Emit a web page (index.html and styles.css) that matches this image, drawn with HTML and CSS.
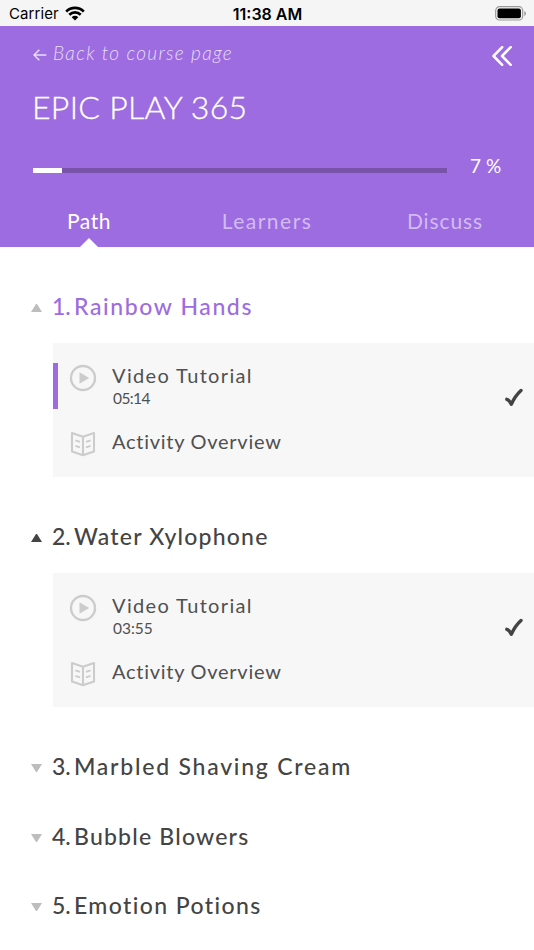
FILE: index.html
```html
<!DOCTYPE html>
<html lang="en">
<head>
<meta charset="utf-8">
<title>EPIC PLAY 365</title>
<link rel="stylesheet" href="styles.css">
</head>
<body>
<svg class="defs" aria-hidden="true">
  <symbol id="play" viewBox="0 0 28 28"><circle cx="14" cy="14" r="12" fill="none" stroke="currentColor" stroke-width="2.4"/><path d="M10.500 8.300v11.400l9.700-5.700z" fill="currentColor"/></symbol>
  <symbol id="book" viewBox="0 0 28 28"><g fill="none" stroke="currentColor" stroke-width="2.1" stroke-linejoin="round"><path d="M14 6.800 3 3v18.500l11 3.700 11-3.700V3zM14 6.800V25"/><path d="M6.400 10.300 11 11.900M6.400 15.800 11 17.400M21.600 10.300 17 11.900M21.600 15.800 17 17.400" stroke-width="1.900"/></g></symbol>
  <symbol id="check" viewBox="0 0 20 20"><path d="M2.800 11.300Q5.300 11.800 7.300 16.300Q11 8 17 2.500" fill="none" stroke="currentColor" stroke-width="3.400" stroke-linecap="round" stroke-linejoin="round"/></symbol>
</svg>
<div class="status">
  <div class="carrier"><span>Carrier</span>
    <svg class="wifi" viewBox="0 0 20 15"><g fill="none" stroke="#000" stroke-width="2.700"><path d="M1.200 5.600a12.400 12.400 0 0 1 17.600 0"/><path d="M4.300 8.800a8.100 8.100 0 0 1 11.400 0"/></g><path d="M10 14.500 6.700 11.200a4.700 4.700 0 0 1 6.600 0z"/></svg>
  </div>
  <div class="clock">11:38 AM</div>
  <svg class="battery" viewBox="0 0 32 15"><rect x=".7" y=".7" width="27" height="13.300" rx="3.800" fill="none" stroke="#999" stroke-width="1.200"/><rect x="2.500" y="2.500" width="23.400" height="9.700" rx="2"/><path d="M29.300 5v5q1.700-.7 1.700-2.500T29.300 5z" fill="#999"/></svg>
</div>
<header class="hero">
  <div class="top">
    <a class="back"><svg class="arrow" viewBox="0 0 14 12"><path d="M13.300 6H1M6.300 .8 1 6l5.300 5.200" fill="none" stroke="currentColor" stroke-width="1.500"/></svg><span>Back to course page</span></a>
    <svg class="collapse" viewBox="0 0 20 20"><path d="M10.200 1.200 1.500 10l8.700 8.800M18.700 1.200 10 10l8.700 8.800" fill="none" stroke="#fff" stroke-width="2.500" stroke-linecap="round" stroke-linejoin="round"/></svg>
  </div>
  <h1>EPIC PLAY 365</h1>
  <div class="progress"><div class="track"><div class="fill" style="width:7%"></div></div><span class="percent">7 %</span></div>
  <nav><a class="tab path">Path</a><a class="tab learners">Learners</a><a class="tab discuss">Discuss</a></nav>
</header>
<main>
  <section class="open current">
    <h2><i class="caret up"></i><span class="num">1.</span><span class="rainbow">Rainbow Hands</span></h2>
    <div class="card">
      <div class="lesson active"><svg class="icon"><use href="#play"/></svg><div><div class="name video">Video Tutorial</div><div class="time">05:14</div></div><svg class="check"><use href="#check"/></svg></div>
      <div class="lesson reading"><svg class="icon"><use href="#book"/></svg><div class="name activity">Activity Overview</div></div>
    </div>
  </section>
  <section class="open">
    <h2><i class="caret up"></i><span class="num">2.</span><span class="water">Water Xylophone</span></h2>
    <div class="card">
      <div class="lesson"><svg class="icon"><use href="#play"/></svg><div><div class="name video">Video Tutorial</div><div class="time later">03:55</div></div><svg class="check"><use href="#check"/></svg></div>
      <div class="lesson reading"><svg class="icon"><use href="#book"/></svg><div class="name activity">Activity Overview</div></div>
    </div>
  </section>
  <section><h2><i class="caret down"></i><span class="num">3.</span><span class="marbled">Marbled Shaving Cream</span></h2></section>
  <section><h2><i class="caret down"></i><span class="num">4.</span><span class="bubble">Bubble Blowers</span></h2></section>
  <section><h2><i class="caret down"></i><span class="num">5.</span><span class="emotion">Emotion Potions</span></h2></section>
</main>
</body>
</html>
```
FILE: styles.css
```css
* { box-sizing: border-box; }
body { margin: 0; height: 950px; overflow: hidden; background: #fff; color: #444; font-family: Lato, sans-serif; }
svg { display: block; flex: none; }
.defs { width: 0; height: 0; position: absolute; }

.status { height: 26px; background: #f5f5f5; color: #000; display: grid; grid-template-columns: 1fr auto 1fr; align-items: center; padding: 1px 8px 0 9px; font: 15px/26px Inter, sans-serif; }
.carrier { display: flex; align-items: center; gap: 6px; letter-spacing: .1px; }
.wifi { width: 20px; height: 15px; margin-top: -2px; }
.clock { font-size: 16px; font-weight: 600; }
.battery { width: 32px; height: 15px; justify-self: end; margin: -1px -1px 0 0; }

.hero { height: 221px; background: #9d6ce0; color: #fff; }
.top { height: 52px; padding: 0 22px 0 33px; display: flex; justify-content: space-between; align-items: center; }
.back { display: flex; align-items: center; gap: 6px; color: #e9ddf8; font-size: 19px; font-weight: 300; font-style: italic; letter-spacing: 1.32px; }
.arrow { width: 14px; height: 12px; margin-top: 6px; }
.collapse { width: 20px; height: 20px; margin-top: 8px; }
h1 { margin: 0; padding: 1px 0 0 32px; height: 56px; font-size: 32px; line-height: 56px; font-weight: 300; letter-spacing: .3px; -webkit-text-stroke: .3px #fff; }
.progress { height: 72px; padding: 0 32px 0 33px; display: flex; align-items: center; }
.track { width: 414px; height: 5px; background: #7853a9; }
.fill { height: 100%; background: #fff; }
.percent { margin-left: 23px; padding-bottom: 9px; font-size: 19px; white-space: nowrap; }
nav { height: 41px; display: grid; grid-template-columns: repeat(3, 1fr); text-align: center; }
.tab { position: relative; padding-top: 1px; font-size: 21px; line-height: 28px; color: #d3bbf1; }
.path { color: #fff; letter-spacing: .6px; }
.learners { letter-spacing: 1.5px; }
.discuss { letter-spacing: .9px; }
.path::after { content: ""; position: absolute; left: 80px; bottom: 0; border: 9px solid transparent; border-top-width: 0; border-bottom-color: #fff; }

main { padding-top: 24px; }
h2 { margin: 0; height: 69.6px; padding: 1px 0 0 31px; display: flex; align-items: center; font-size: 23px; font-weight: 500; line-height: 28px; }
.caret { width: 11px; margin: 4px 10px 0 0; border: 5.500px solid transparent; }
.up { border-top: 0; border-bottom: 8.500px solid #444; }
.down { border-bottom: 0; border-top: 8.500px solid #bdbdbd; }
.num { width: 22px; white-space: nowrap; }
.current h2 { color: #9d6ce0; }
.current .caret { border-bottom-color: #bdbdbd; }
.rainbow { letter-spacing: 1.600px; }
.water { letter-spacing: 1.200px; }
.marbled { letter-spacing: 1.760px; }
.bubble { letter-spacing: 1.200px; }
.emotion { letter-spacing: 1.400px; }
.open { margin-bottom: 24px; }
.card { margin: 2.400px 0 0 53px; height: 134px; padding-top: 20.500px; background: #f7f7f7; }
.lesson { display: flex; height: 45.500px; padding-left: 10.500px; padding-right: 10px; border-left: 5px solid transparent; }
.active { border-left-color: #9d6ce0; }
.icon { width: 28px; height: 28px; margin: .5px 15.500px 0 0; color: #ccc; }
.name { font-size: 20px; line-height: 24px; color: #505050; }
.video { letter-spacing: 1.350px; }
.activity { letter-spacing: .73px; }
.time { font-size: 15.500px; line-height: 23px; letter-spacing: -.6px; padding-left: 1px; color: #505050; }
.later { letter-spacing: 0; }
.check { width: 20px; height: 20px; margin: 25px 0 0 auto; color: #444; }
.reading { margin-top: 20.500px; height: 28px; }
```
